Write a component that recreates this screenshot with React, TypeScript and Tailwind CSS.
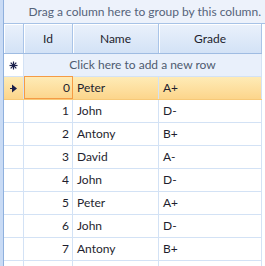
import React from "react";

const rows = [
  { id: 0, name: "Peter", grade: "A+" },
  { id: 1, name: "John", grade: "D-" },
  { id: 2, name: "Antony", grade: "B+" },
  { id: 3, name: "David", grade: "A-" },
  { id: 4, name: "John", grade: "D-" },
  { id: 5, name: "Peter", grade: "A+" },
  { id: 6, name: "John", grade: "D-" },
  { id: 7, name: "Antony", grade: "B+" },
  { id: 8, name: "", grade: "" },
];

function Arrow() {
  return (
    <svg width="9" height="9" viewBox="0 0 9 9">
      <rect x="1" y="4" width="3" height="1" fill="#1b1f4a" />
      <path d="M3 0.5 L8 4.5 L3 8.5 Z" fill="#1b1f4a" />
    </svg>
  );
}

function Star() {
  return (
    <svg width="9" height="9" viewBox="0 0 9 9" stroke="#1b1f4a" strokeWidth="1.2">
      <line x1="4.5" y1="0.5" x2="4.5" y2="8.5" />
      <line x1="0.5" y1="4.5" x2="8.5" y2="4.5" />
      <line x1="1.7" y1="1.7" x2="7.3" y2="7.3" />
      <line x1="7.3" y1="1.7" x2="1.7" y2="7.3" />
    </svg>
  );
}

export default function App() {
  return (
    <div
      className="w-[265px] h-[266px] overflow-hidden bg-white flex text-[12px] text-[#1e1e2e]"
      style={{ fontFamily: 'Lato, "Noto Sans", sans-serif' }}
    >
      <div className="w-[3px] bg-[#c9dbf5] shrink-0" />
      <div className="w-[1px] bg-[#8fb0dd] shrink-0" />
      <div className="flex flex-col w-[261px]">
        <div className="h-[24px] shrink-0 bg-[#edf2fb] border-b border-[#a7c2e6] flex items-center justify-end pr-[4px] text-[#55637a] w-[261px] -mr-[3px]">
          Drag a column here to group by this column.
        </div>
        <div className="flex h-[30px] shrink-0 border-b border-[#9fbce2] bg-gradient-to-b from-[#eaf1fb] to-[#d3e2f6] w-[258px]">
          <div className="w-[20px] border-r border-[#a9c4e8] shadow-[inset_1px_1px_0_#ffffff]" />
          <div className="w-[49px] border-r border-[#a9c4e8] shadow-[inset_1px_1px_0_#ffffff] flex items-center justify-center">Id</div>
          <div className="w-[86px] border-r border-[#a9c4e8] shadow-[inset_1px_1px_0_#ffffff] flex items-center justify-center">Name</div>
          <div className="w-[103px] border-r border-[#a9c4e8] shadow-[inset_1px_1px_0_#ffffff] flex items-center justify-center">Grade</div>
        </div>
        <div className="flex h-[23px] shrink-0 border-b border-[#d3e2f5] bg-[#e9f0fb] w-[258px]">
          <div className="w-[20px] border-r border-[#d3e2f5] bg-white flex items-center justify-center">
            <Star />
          </div>
          <div className="flex-1 border-r border-[#d3e2f5] flex items-center justify-center text-[#4e5b70]">
            Click here to add a new row
          </div>
        </div>
        {rows.map((r, i) => {
          const sel = i === 0;
          return (
            <div
              key={i}
              className={
                sel
                  ? "flex h-[23px] shrink-0 border-b border-[#f7c978] bg-gradient-to-b from-[#feebb6] to-[#fcd58b] w-[258px]"
                  : "flex h-[23px] shrink-0 border-b border-[#d3e2f5] w-[258px]"
              }
            >
              <div
                className={
                  sel
                    ? "w-[20px] border-r border-[#d3e2f5] flex items-center justify-center"
                    : "w-[20px] border-r border-[#d3e2f5]"
                }
              >
                {sel ? <Arrow /> : null}
              </div>
              <div
                className={
                  sel
                    ? "w-[49px] border border-[#f59b45] flex items-center justify-end pr-[2px] -mt-[1px] h-[23px]"
                    : "w-[49px] border-r border-[#d3e2f5] flex items-center justify-end pr-[3px]"
                }
              >
                {r.name ? r.id : ""}
              </div>
              <div className="w-[86px] border-r border-[#d3e2f5] flex items-center pl-[4px]">{r.name}</div>
              <div className="w-[103px] border-r border-[#d3e2f5] flex items-center pl-[4px]">{r.grade}</div>
            </div>
          );
        })}
      </div>
    </div>
  );
}
